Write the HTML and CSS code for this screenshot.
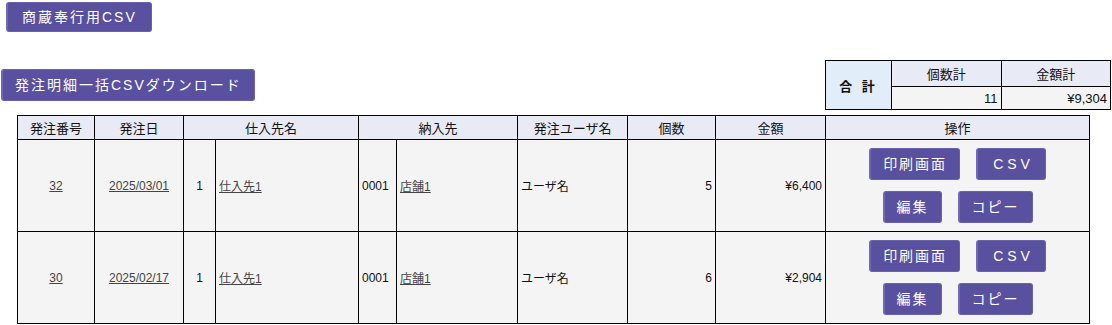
FILE: index.html
```html
<!DOCTYPE html>
<html lang="ja">
<head>
    <meta charset="UTF-8">
    <title>発注一覧</title>
    <link rel="stylesheet" href="styles.css">
</head>
<body>
    <div class="top">
        <button class="btn">商蔵奉行用CSV</button>
    </div>

    <div class="bar">
        <button class="btn btn-dl">発注明細一括CSVダウンロード</button>
        <table class="summary">
            <tr>
                <th class="total" rowspan="2">合 計</th>
                <th class="sum-head">個数計</th>
                <th class="sum-head">金額計</th>
            </tr>
            <tr>
                <td class="num">11</td>
                <td class="num">¥9,304</td>
            </tr>
        </table>
    </div>

    <table class="list">
        <colgroup>
            <col style="width:77px">
            <col style="width:89px">
            <col style="width:32px">
            <col style="width:143px">
            <col style="width:38px">
            <col style="width:121px">
            <col style="width:110px">
            <col style="width:88px">
            <col style="width:110px">
            <col style="width:264px">
        </colgroup>
        <tr>
            <th>発注番号</th>
            <th>発注日</th>
            <th colspan="2">仕入先名</th>
            <th colspan="2">納入先</th>
            <th>発注ユーザ名</th>
            <th>個数</th>
            <th>金額</th>
            <th>操作</th>
        </tr>
        <tr>
            <td class="center"><a href="#">32</a></td>
            <td class="center"><a href="#">2025/03/01</a></td>
            <td class="center">1</td>
            <td><a href="#">仕入先1</a></td>
            <td>0001</td>
            <td><a href="#">店舗1</a></td>
            <td>ユーザ名</td>
            <td class="num">5</td>
            <td class="num">¥6,400</td>
            <td class="ops">
                <div class="ops-row">
                    <button class="btn">印刷画面</button>
                    <button class="btn btn-csv">CSV</button>
                </div>
                <div class="ops-row">
                    <button class="btn">編集</button>
                    <button class="btn">コピー</button>
                </div>
            </td>
        </tr>
        <tr>
            <td class="center"><a href="#">30</a></td>
            <td class="center"><a href="#">2025/02/17</a></td>
            <td class="center">1</td>
            <td><a href="#">仕入先1</a></td>
            <td>0001</td>
            <td><a href="#">店舗1</a></td>
            <td>ユーザ名</td>
            <td class="num">6</td>
            <td class="num">¥2,904</td>
            <td class="ops">
                <div class="ops-row">
                    <button class="btn">印刷画面</button>
                    <button class="btn btn-csv">CSV</button>
                </div>
                <div class="ops-row">
                    <button class="btn">編集</button>
                    <button class="btn">コピー</button>
                </div>
            </td>
        </tr>
    </table>
</body>
</html>
```

FILE: styles.css
```css
body {
    margin: 0;
    font-family: "Liberation Sans", "Noto Sans CJK JP", sans-serif;
    font-size: 12px;
    color: #111;
    background: #fff;
}
.top {
    padding: 2px 0 0 6px;
}
.btn {
    font-family: "Liberation Sans", "Noto Sans CJK JP", sans-serif;
    font-size: 14px;
    letter-spacing: 2px;
    line-height: 18px;
    color: #fff;
    background-color: #5a50a0;
    border: 1px solid #6a61ad;
    border-left: 2px solid #7068b4;
    border-radius: 3px;
    padding: 5px 14px;
    cursor: pointer;
}
.bar {
    display: flex;
    justify-content: space-between;
    align-items: flex-start;
    padding: 0 1px 0 1px;
    margin-top: 28px;
}
.btn-dl {
    margin-top: 9px;
    height: 32px;
    padding: 0 12px;
}
.summary {
    border-collapse: collapse;
    table-layout: fixed;
    width: 286px;
    font-size: 13px;
}
.summary th,
.summary td {
    border: 1px solid #000;
    padding: 0 3px;
}
.summary .total {
    width: 59px;
    background-color: #e1eefa;
    font-weight: bold;
    letter-spacing: 3px;
    height: 47px;
}
.summary .sum-head {
    height: 25px;
    font-weight: normal;
    background-color: #e8eaf6;
}
.summary td {
    height: 22px;
    background-color: #f4f4f4;
}
.list {
    border-collapse: collapse;
    table-layout: fixed;
    margin: 5px 0 0 17px;
    width: 1072px;
}
.list th {
    font-weight: normal;
    font-size: 13px;
    height: 23px;
    padding: 0;
    background-color: #e8eaf6;
    border: 1px solid #000;
}
.list td {
    background-color: #f4f4f4;
    border: 1px solid #000;
    height: 91px;
    padding: 0 3px;
    white-space: nowrap;
}
.list a {
    color: #444;
    text-decoration: underline;
}
.center {
    text-align: center;
}
.num {
    text-align: right;
}
.ops {
    text-align: center;
}
.ops-row {
    display: flex;
    justify-content: center;
    gap: 16px;
    margin: 5px 0 11px;
}
.ops-row:last-child {
    margin-bottom: 5px;
}
.ops .btn {
    height: 32px;
    padding: 0 12px;
}
.ops .btn-csv {
    letter-spacing: 4px;
    padding: 0 11px 0 15px;
}
```
